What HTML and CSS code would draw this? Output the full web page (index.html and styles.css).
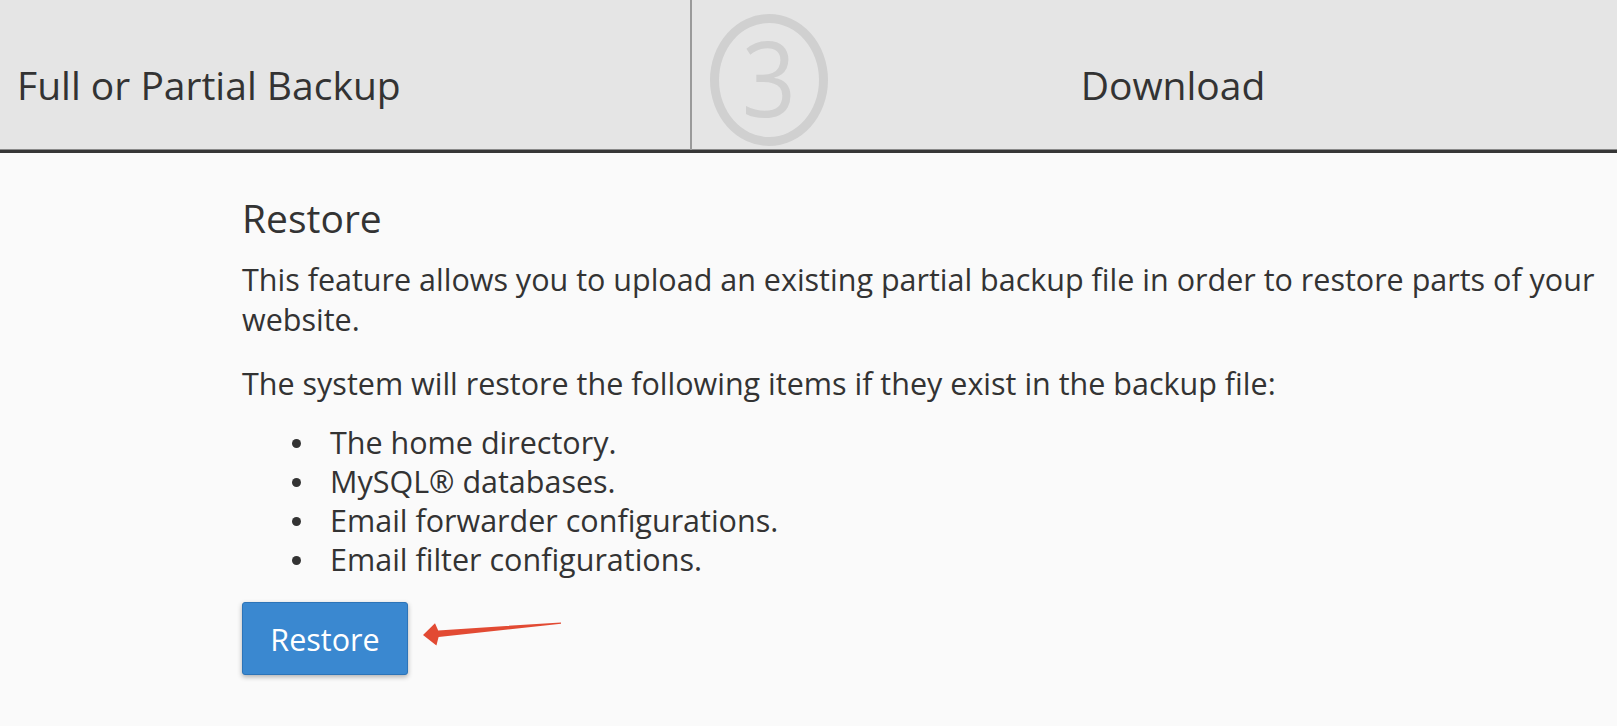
FILE: index.html
```html
<!DOCTYPE html>
<html lang="en">
<head>
<meta charset="utf-8">
<title>Restore</title>
<link rel="stylesheet" href="styles.css">
</head>
<body>
<div class="page">
  <header class="wizard">
    <div class="step step-first">
      <span class="step-label">Full or Partial Backup</span>
    </div>
    <div class="step step-last">
      <span class="step-num"><span class="digit">3</span></span>
      <span class="step-label">Download</span>
    </div>
  </header>
  <main class="main">
    <h2 class="title">Restore</h2>
    <p class="text">This feature allows you to upload an existing partial backup file in order to restore parts of your website.</p>
    <p class="text text-second">The system will restore the following items if they exist in the backup file:</p>
    <ul class="items">
      <li>The home directory.</li>
      <li>MySQL® databases.</li>
      <li>Email forwarder configurations.</li>
      <li>Email filter configurations.</li>
    </ul>
    <div class="actions">
      <button class="btn" type="button">Restore</button>
      <svg class="arrow" width="150" height="36" viewBox="0 0 150 36" aria-hidden="true">
        <polygon points="8,24 20,12.2 23.2,19.4 146,11.4 146,12.8 23.6,26 21.4,34.6" fill="#e24a33"/>
      </svg>
    </div>
  </main>
</div>
</body>
</html>
```

FILE: styles.css
```css
html, body {
  margin: 0;
  padding: 0;
}
body {
  background: #fafafa;
  font-family: "Open Sans", "Liberation Sans", sans-serif;
  color: #333;
  overflow: hidden;
}
.page {
  width: 1617px;
  height: 726px;
  overflow: hidden;
}
.wizard {
  display: flex;
  height: 150px;
  background: #e5e5e5;
  border-bottom: 3px solid #363636;
  box-shadow: inset 0 -1px 0 #8a8a8a;
  width: 1660px;
}
.step {
  position: relative;
  height: 150px;
  box-sizing: border-box;
  padding-top: 65px;
  overflow: hidden;
}
.step-label {
  display: block;
  font-size: 39px;
  line-height: 40px;
  color: #333;
  position: relative;
}
.step-first {
  width: 692px;
  padding-left: 17px;
  border-right: 2px solid #9a9a9a;
}
.step-last {
  width: 962px;
  text-align: center;
}
.step-num {
  position: absolute;
  left: 18px;
  top: 14px;
  width: 100px;
  height: 114px;
  border: 9px solid #d0d0d0;
  border-radius: 50%;
  display: flex;
  align-items: center;
  justify-content: center;
}
.digit {
  font-size: 95px;
  line-height: 1;
  color: #d0d0d0;
  transform: scaleY(1.1);
  margin-top: -8px;
}
.main {
  padding: 45px 10px 0 242px;
}
.title {
  margin: 0 0 21px;
  font-size: 39px;
  line-height: 40px;
  font-weight: 400;
  color: #333;
}
.text {
  margin: 0;
  font-size: 30.5px;
  line-height: 40px;
}
.text-second {
  margin-top: 24px;
}
.items {
  list-style: none;
  margin: 20px 0 0;
  padding-left: 88px;
  font-size: 30.5px;
  line-height: 39px;
}
.items li {
  position: relative;
}
.items li::before {
  content: "";
  position: absolute;
  left: -38px;
  top: 16px;
  width: 9px;
  height: 9px;
  border-radius: 50%;
  background: #333;
}
.actions {
  position: relative;
  margin-top: 23px;
  height: 73px;
}
.btn {
  font-family: "Open Sans", "Liberation Sans", sans-serif;
  font-size: 30.5px;
  color: #fff;
  background: #3a88d0;
  border: 1px solid #2c74b8;
  border-radius: 3px;
  width: 166px;
  height: 73px;
  padding: 0;
  box-shadow: 0 2px 5px rgba(0, 0, 0, 0.3);
  cursor: pointer;
}
.arrow {
  position: absolute;
  left: 173px;
  top: 9px;
}
```
